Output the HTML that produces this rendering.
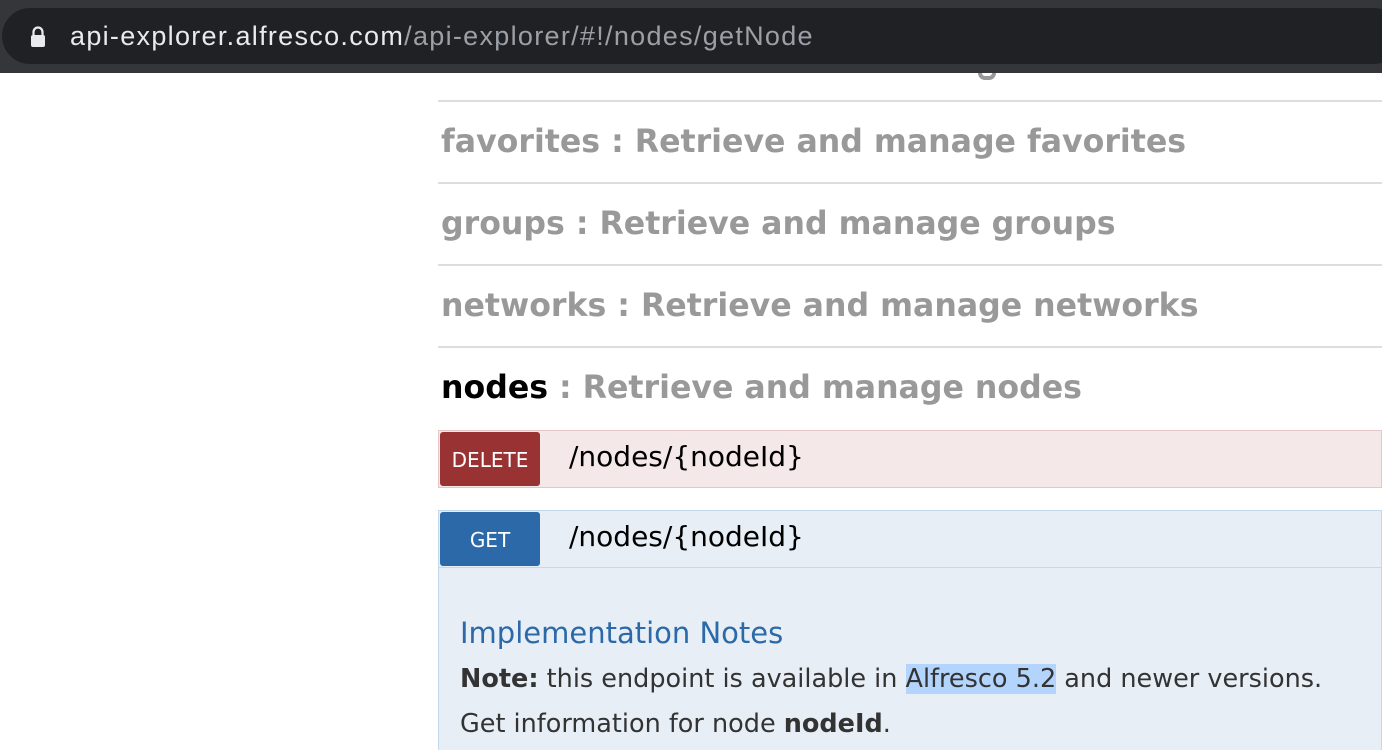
<!DOCTYPE html>
<html><head><meta charset="utf-8"><style>
*{margin:0;padding:0;box-sizing:border-box}
html,body{width:1382px;height:750px;overflow:hidden}
body{background:#fff;font-family:"DejaVu Sans",sans-serif;position:relative}
.bar{position:absolute;left:0;top:0;width:1382px;height:73px;background:#35363a}
.pill{position:absolute;left:2px;top:8px;width:1400px;height:56px;border-radius:28px;background:#202124}
.url{position:absolute;left:70px;top:21px;font-size:27px;color:#e8eaed;white-space:nowrap;font-family:"Liberation Sans",sans-serif;letter-spacing:1.3px}
.url span{color:#9aa0a6}
.lock{position:absolute;left:30px;top:26px}
.row{position:absolute;left:438px;width:944px;height:82px;border-bottom:2px solid #ddd}
.h{position:absolute;left:441px;font-size:31.6px;font-weight:bold;color:#999;white-space:nowrap}
.h b{color:#000}
.op{position:absolute;left:438px;width:944px;height:58px}
.lbl{position:absolute;left:2px;top:2px;width:100px;height:54px;border-radius:3px;color:#fff;font-size:20px;text-align:center;line-height:56px}
.path{position:absolute;left:130px;top:9px;font-size:28px;color:#000}
</style></head><body>
<div class="bar"><div class="pill"></div>
<svg class="lock" width="16" height="22" viewBox="0 0 16 22"><path d="M3.5 9V6a4.5 4.5 0 0 1 9 0v3" fill="none" stroke="#e8eaed" stroke-width="2.2"/><rect x="1" y="9" width="14" height="12" rx="2" fill="#e8eaed"/></svg>
<div class="url">api-explorer.alfresco.com<span>/api-explorer/#!/nodes/getNode</span></div></div>
<div style="position:absolute;left:978px;top:73px;width:18px;height:7px;border:4px solid #999;border-top:none;border-radius:0 0 9px 9px"></div>
<div class="row" style="top:20px"></div>
<div class="row" style="top:102px"></div>
<div class="row" style="top:184px"></div>
<div class="row" style="top:266px"></div>
<div class="h" style="top:124px">favorites : Retrieve and manage favorites</div>
<div class="h" style="top:206px">groups : Retrieve and manage groups</div>
<div class="h" style="top:288px">networks : Retrieve and manage networks</div>
<div class="h" style="top:370px"><b>nodes</b> : Retrieve and manage nodes</div>
<div class="op" style="top:430px;background:#f5e8e8;border:1px solid #e8c6c7">
<div class="lbl" style="background:#993333;left:1px;top:1px">DELETE</div><div class="path">/nodes/{nodeId}</div></div>
<div class="op" style="top:510px;height:250px;background:#e7eef6;border:1px solid #c3d9ec">
<div style="position:absolute;left:0;top:56px;width:100%;border-top:1px solid #c3d9ec"></div>
<div class="lbl" style="background:#2b69a8;left:1px;top:1px">GET</div><div class="path">/nodes/{nodeId}</div>
<div style="position:absolute;left:21px;top:105px;font-size:29px;color:#2b69a8">Implementation Notes</div>
<div style="position:absolute;left:21px;top:153px;font-size:25.5px;color:#333;white-space:nowrap"><b>Note:</b> this endpoint is available in <span style="background:#b3d4fc">Alfresco 5.2</span> and newer versions.</div>
<div style="position:absolute;left:21px;top:198px;font-size:25.5px;color:#333;white-space:nowrap">Get information for node <b>nodeId</b>.</div>
</div>
</body></html>
